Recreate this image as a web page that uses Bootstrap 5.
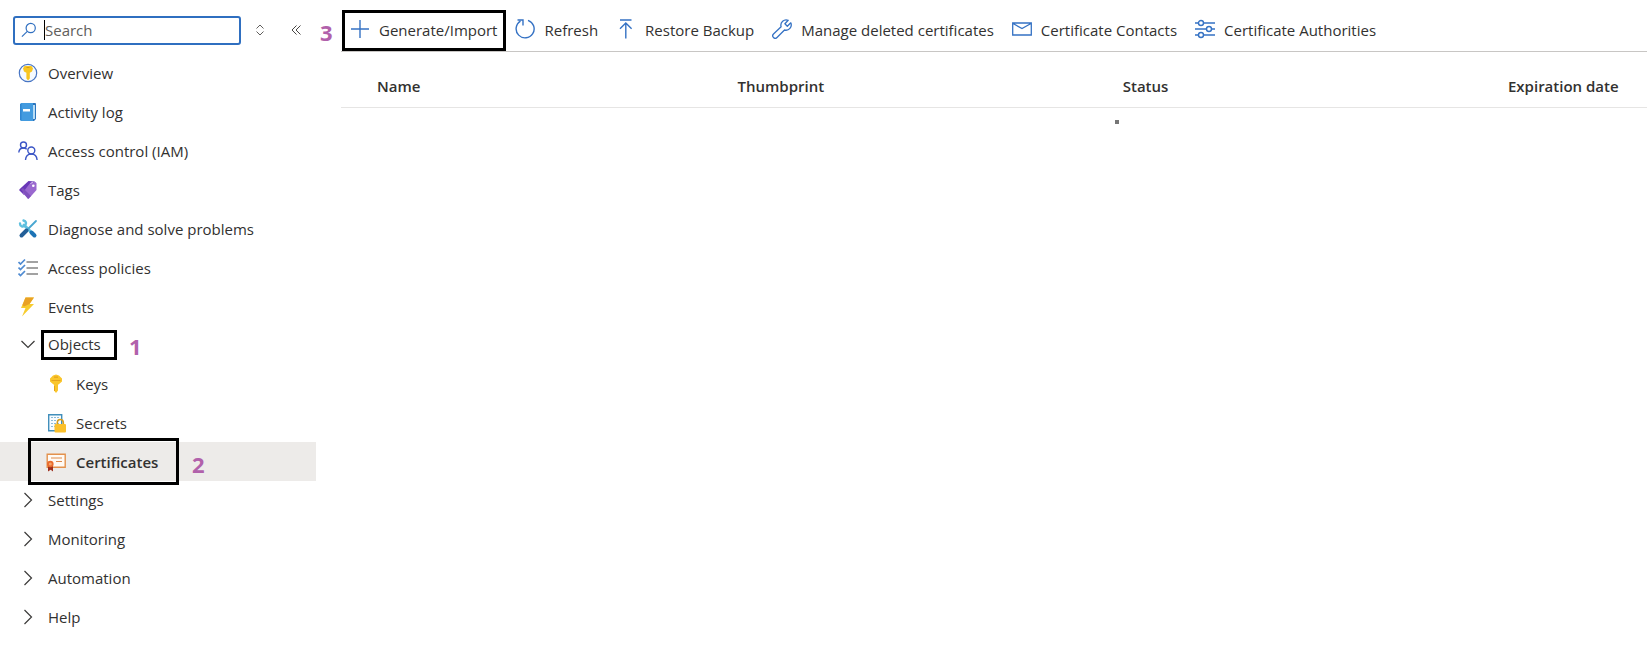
<!DOCTYPE html>
<html lang="en">
<head>
<meta charset="utf-8">
<meta name="viewport" content="width=device-width, initial-scale=1">
<title>Certificates</title>
<link href="https://cdn.jsdelivr.net/npm/bootstrap@5.3.0/dist/css/bootstrap.min.css" rel="stylesheet">
<style>
  body { font-family: "Open Sans", "Noto Sans", sans-serif; font-size: 15px; line-height: 20px; color: #323130; background: #fff; }
  svg { display: block; flex: none; fill: none; }
  .side-pane { width: 316px; }
  .search-row { height: 53px; padding: 7px 0 0 13px; }
  .search-box { width: 228px; height: 29px; }
  .search-box input { height: 29px; padding: 0 8px 0 30px; border: 2px solid #2f6fc0; border-radius: 3px; font-size: 15px; line-height: 20px; box-shadow: none !important; }
  .search-box input::placeholder { color: #605e5c; opacity: 1; }
  .search-glyph { position: absolute; left: 8px; top: 6px; }
  .caret-bar { position: absolute; left: 31px; top: 4px; width: 1px; height: 20px; background: #000; }
  .sort-btn { margin: 0 26px 0 14px; }
  .side-link { height: 39px; padding: 0 18px; gap: 10px; color: inherit; text-decoration: none; border: 0; background: none; width: 100%; text-align: left; }
  .side-link.is-group { padding-bottom: 2px; }
  .side-link.is-open { height: 38px; }
  .side-link.is-child { padding-left: 46px; }
  .side-link.is-current { background: #edebe9; font-weight: 600; }
  .marked { position: relative; }
  .marked::before { content: ""; position: absolute; border: 3px solid #000; pointer-events: none; }
  .mark-objects::before { inset: -4px -16px -6px -7px; }
  .mark-certs::before { inset: -4px 137px -4px 28px; }
  .mark-generate::before { inset: 0; }
  .step { position: absolute; font-family: "Noto Sans", sans-serif; font-size: 22px; line-height: 24px; font-weight: 700; color: #b161ab; }
  .step-1 { left: 81px; top: 0; }
  .step-2 { left: 192px; top: 10px; }
  .step-3 { left: -22px; top: 10px; }
  .main-pane { min-width: 0; margin-left: 25px; }
  .toolbar { padding: 10px 0 0 1px; border-bottom: 1px solid #c8c6c4; }
  .tool { height: 41px; padding: 0 9px 2px; gap: 9px; border: 0; background: none; color: inherit; white-space: nowrap; }
  .tool.mark-generate { gap: 10px; }
  .tool svg { margin-top: -2px; }
  .cert-table { table-layout: fixed; width: 100%; }
  .cert-table th { padding: 24px 0 11px 36px; font-weight: 600; line-height: 20px; border-bottom: 1px solid #e6e5e4; white-space: nowrap; }
  .cert-table td { padding: 12px 0 12px 28px; }
  .col-a { width: 27.6%; } .col-b { width: 29.5%; }
  .dot { width: 4px; height: 4px; background: #767676; }
</style>
</head>
<body>
<div class="d-flex min-vh-100">
  <nav class="side-pane flex-shrink-0" aria-label="Resource menu">
    <div class="search-row d-flex align-items-center">
      <div class="search-box position-relative flex-shrink-0">
        <input type="text" class="form-control" placeholder="Search" aria-label="Search">
        <svg class="search-glyph" width="16" height="16" viewBox="0 0 16 16" stroke="#2f6fc0" stroke-width="1.2"><circle cx="9.7" cy="6" r="4.6"/><path d="M6.3 9.3.9 14.7"/></svg>
        <span class="caret-bar"></span>
      </div>
      <button class="btn p-0 border-0 sort-btn" aria-label="Sort"><svg width="10" height="12" viewBox="0 0 10 12" stroke="#605e5c"><path d="M1.500 4.500 5 1l3.500 3.500M1.500 7.500 5 11l3.500-3.500"/></svg></button>
      <button class="btn p-0 border-0" aria-label="Collapse menu"><svg width="12" height="12" viewBox="0 0 12 12" stroke="#484644"><path d="M5.500 1.500 1 6l4.500 4.500M9.500 1.500 5 6l4.500 4.500"/></svg></button>
    </div>

    <a href="#" class="side-link d-flex align-items-center"><svg width="20" height="20" viewBox="0 0 20 20"><circle cx="10" cy="10" r="8.700" fill="#f5faff" stroke="#4775c4" stroke-width="1.200"/><path fill="#f8c51f" d="M6.500 3h7l1.500 2.500-1 3-2.200 1.300v5.700L10 17.500l-1.600-2V9.800L6 8.500l-1-3z"/><path stroke="#d99b12" d="M8.500 4.500h3"/></svg>Overview</a>
    <a href="#" class="side-link d-flex align-items-center"><svg width="20" height="20" viewBox="0 0 20 20"><path fill="#2b75bd" d="M3 1h14a1 1 0 0 1 1 1v15l-2 2H3z"/><path fill="#b9ddf5" d="M15 3h2v14h-2z"/><path fill="#439bdf" d="M2 2.500A1.500 1.500 0 0 1 3.500 1H15v18H3.500A1.500 1.500 0 0 1 2 17.500z"/><path fill="#2f86d2" d="M2 2h1.500v16H2z"/><path fill="#fff" d="M5 7h7v2.500H5z"/></svg>Activity log</a>
    <a href="#" class="side-link d-flex align-items-center"><svg width="20" height="20" viewBox="0 0 20 20" stroke="#3b55c6" stroke-width="1.400"><circle cx="5.500" cy="4" r="3"/><path d="M.800 11.500C1 8.500 3 7 5.500 7c1.500 0 2.500.500 3.200 1.200"/><circle cx="13.300" cy="9.500" r="3.500"/><path d="M7.500 19c.300-4 2.500-6 5.800-6s5.500 2 5.800 6"/></svg>Access control (IAM)</a>
    <a href="#" class="side-link d-flex align-items-center"><svg width="20" height="20" viewBox="0 0 20 20"><path fill="#6937b7" d="M10.500 1 17 1.500 6 15l-4.500-4.500a1 1 0 0 1 0-1.300z"/><path fill="#9a68cf" d="m12.500 2.500 5-.5 1 1.500v6.500l-8 9-6-6z"/><path fill="#8050bd" d="m3 9.500 2-1.500 8 8-3 3z"/><circle cx="15.300" cy="5.700" r="1.300" fill="#fff"/><path stroke="#d9c6ee" d="M12.500 3.500 15 2"/></svg>Tags</a>
    <a href="#" class="side-link d-flex align-items-center"><svg width="20" height="20" viewBox="0 0 20 20" stroke-linecap="round"><path stroke="#5fc0df" stroke-width="3" d="m6 6 7 7"/><path stroke="#1c73b5" stroke-width="4" d="m13.500 13.500 3 3"/><path stroke="#5fc0df" stroke-width="2.400" d="M2 4.500c0 3 3 4 5 2s1-4.500-1.500-5"/><path stroke="#48a7d1" stroke-width="1.800" d="m18 2-8 8"/><path stroke="#235f98" stroke-width="4" d="m8.500 11.500-5 5"/></svg>Diagnose and solve problems</a>
    <a href="#" class="side-link d-flex align-items-center"><svg width="20" height="20" viewBox="0 0 20 20"><path stroke="#4f8bd2" stroke-width="1.700" d="m.500 4 2 2L7 1.500m-6.500 8 2 2L7 7M.500 15.500l2 2L7 13"/><path stroke="#a2a2a2" stroke-width="2" d="M8.500 4H20M8.500 10H20M8.500 16H20"/></svg>Access policies</a>
    <a href="#" class="side-link d-flex align-items-center"><svg width="20" height="20" viewBox="0 0 20 20"><path fill="#f7cc2e" d="M7.500.500H16L11.500 7H16L4 19.500 7.500 11H3z"/><path fill="#e9a125" d="M7.500.500H16L11.500 7 6 9.500 4.500 8z"/></svg>Events</a>

    <button class="side-link is-group is-open d-flex align-items-center" aria-expanded="true"><svg width="20" height="20" viewBox="0 0 20 20" stroke="#3b3a39" stroke-width="1.200"><path d="m3.500 7 6.500 6.500L16.500 7"/></svg><span class="marked mark-objects">Objects<span class="step step-1">1</span></span></button>
    <a href="#" class="side-link is-child d-flex align-items-center"><svg width="20" height="20" viewBox="0 0 20 20"><path fill="#fac62c" d="M7 1.500 10 .500l3 1 3 3v3l-3.500 3h-.5v6l-2 2.500L8 16.500v-6h-.500L4 7.500v-3z"/><path fill="#e5a31c" d="M8 2.500h4v1.200H8zM5.500 6h9v1h-9zM8 12h1v5H8z"/></svg>Keys</a>
    <a href="#" class="side-link is-child d-flex align-items-center"><svg width="20" height="20" viewBox="0 0 20 20"><path fill="#f8fcff" stroke="#418fbb" stroke-width="1.400" d="M2.700 1.700h13v16h-13z"/><path stroke="#8ebbd6" stroke-dasharray="2 1" d="M5 4.500h9M5 7.500h9M5 10.500h9M5 13.500h9"/><path stroke="#d79d1d" stroke-width="1.600" d="M11.300 12V9.500a3 3 0 0 1 6 0V12"/><rect x="8.500" y="11" width="11.500" height="8.500" rx="1" fill="#fbc02b"/></svg>Secrets</a>
    <a href="#" class="side-link is-child is-current marked mark-certs d-flex align-items-center" aria-current="page"><svg width="20" height="20" viewBox="0 0 20 20"><path fill="#fffaf5" stroke="#e3914d" stroke-width="1.400" d="M1.200 2.200h18v13h-18z"/><path stroke="#dd8a4b" stroke-width="1.200" d="M5 6h11M10 9.500h6"/><path fill="#9e2e1d" d="M2 13h5v6.500l-2.300-1.800L2 19.500z"/><circle cx="4.300" cy="12" r="3.300" fill="#e96b2c"/><circle cx="4.300" cy="12" r="1.500" fill="#f5a36b"/></svg>Certificates<span class="step step-2">2</span></a>
    <button class="side-link is-group d-flex align-items-center" aria-expanded="false"><svg width="20" height="20" viewBox="0 0 20 20" stroke="#3b3a39" stroke-width="1.200"><path d="m6.500 3 7 7-7 7"/></svg>Settings</button>
    <button class="side-link is-group d-flex align-items-center" aria-expanded="false"><svg width="20" height="20" viewBox="0 0 20 20" stroke="#3b3a39" stroke-width="1.200"><path d="m6.500 3 7 7-7 7"/></svg>Monitoring</button>
    <button class="side-link is-group d-flex align-items-center" aria-expanded="false"><svg width="20" height="20" viewBox="0 0 20 20" stroke="#3b3a39" stroke-width="1.200"><path d="m6.500 3 7 7-7 7"/></svg>Automation</button>
    <button class="side-link is-group d-flex align-items-center" aria-expanded="false"><svg width="20" height="20" viewBox="0 0 20 20" stroke="#3b3a39" stroke-width="1.200"><path d="m6.500 3 7 7-7 7"/></svg>Help</button>
  </nav>

  <main class="main-pane flex-grow-1">
    <div class="toolbar d-flex" role="toolbar" aria-label="Certificate commands">
      <button class="tool marked mark-generate d-flex align-items-center"><svg width="18" height="20" viewBox="0 0 18 20" stroke="#3572c4" stroke-width="1.400"><path d="M9 1v18M0 10h18"/></svg>Generate/Import<span class="step step-3">3</span></button>
      <button class="tool d-flex align-items-center"><svg width="20" height="20" viewBox="0 0 20 20" stroke="#3572c4" stroke-width="1.400"><path d="M13 1.300a9 9 0 1 1-7.500.800M2.500 1H8v5.500"/></svg>Refresh</button>
      <button class="tool d-flex align-items-center"><svg width="20" height="20" viewBox="0 0 20 20" stroke="#3572c4" stroke-width="1.400"><path d="M4 1h11.500M9.800 19.500V4M4 9.800 9.800 4l5.800 5.800"/></svg>Restore Backup</button>
      <button class="tool d-flex align-items-center"><svg width="20" height="20" viewBox="0 0 20 20" stroke="#3572c4" stroke-width="1.300" stroke-linejoin="round"><path d="M16.200 1.300A5.300 5.300 0 0 0 9.100 7.700L1.500 15a2.450 2.450 0 0 0 3.500 3.500l7.500-7.500a5.300 5.300 0 0 0 6.300-7.200L15.300 7.200l-2.400-2.400z"/></svg>Manage deleted certificates</button>
      <button class="tool d-flex align-items-center"><svg width="20" height="20" viewBox="0 0 20 20" stroke="#3572c4" stroke-width="1.300"><path d="M.700 4h18.600v12H.700zM1 4.500l9 5 9-5"/></svg>Certificate Contacts</button>
      <button class="tool d-flex align-items-center"><svg width="20" height="20" viewBox="0 0 20 20" stroke="#3572c4" stroke-width="1.400"><path d="M0 4h3.500m5 0H20M0 10h11.500m5 0H20M0 16h3.500m5 0H20"/><circle cx="6" cy="4" r="2.500"/><circle cx="14" cy="10" r="2.500"/><circle cx="6" cy="16" r="2.500"/></svg>Certificate Authorities</button>
    </div>
    <table class="cert-table">
      <thead><tr><th scope="col" class="col-a">Name</th><th scope="col" class="col-b">Thumbprint</th><th scope="col" class="col-b">Status</th><th scope="col">Expiration date</th></tr></thead>
      <tbody><tr><td></td><td></td><td><div class="dot"></div></td><td></td></tr></tbody>
    </table>
  </main>
</div>
<script src="https://cdn.jsdelivr.net/npm/bootstrap@5.3.0/dist/js/bootstrap.bundle.min.js"></script>
</body>
</html>
